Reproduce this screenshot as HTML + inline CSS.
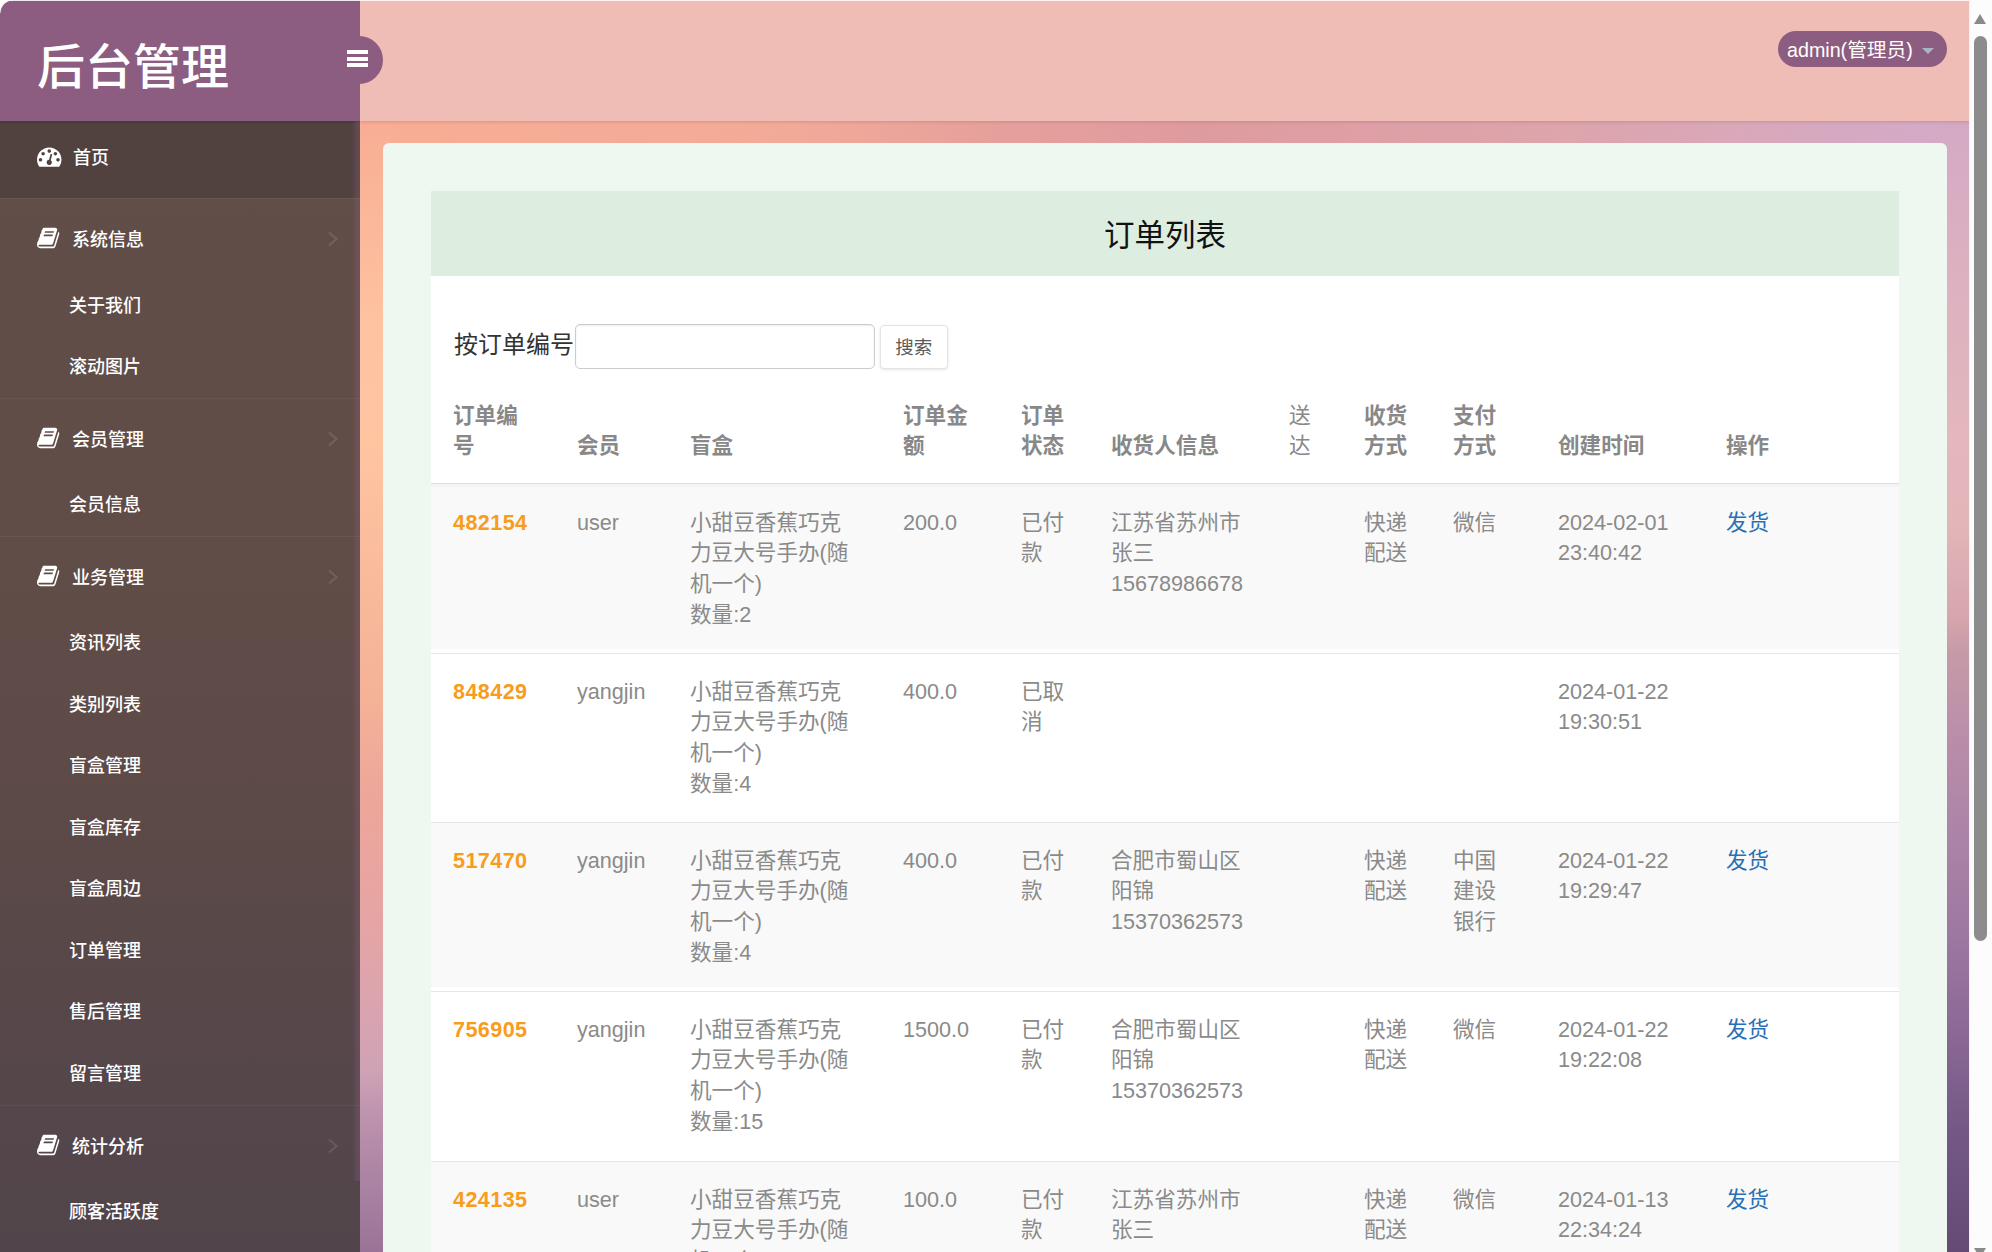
<!DOCTYPE html>
<html lang="zh-CN">
<head>
<meta charset="utf-8">
<title>后台管理</title>
<style>
*{box-sizing:border-box;margin:0;padding:0}
html,body{width:1992px;height:1252px;overflow:hidden}
body{position:relative;font-family:"Liberation Sans","Noto Sans CJK SC",sans-serif;background:#f2b09a;color:#333}
#bgtop{position:absolute;left:360px;top:121px;width:1609px;height:30px;background:linear-gradient(to right,#f8ad94 0%,#f3ab98 25%,#e6a09c 40%,#de9b9f 52%,#dda5ac 75%,#d6a9c1 92%,#d3aac8 100%)}
#bgleft{position:absolute;left:360px;top:121px;width:30px;height:1131px;background:linear-gradient(to bottom,#f8ad94 0%,#fec4a1 19%,#ffc5a1 28%,#f8b99b 42%,#f4b297 51%,#eda69a 60%,#e6a5a3 70%,#d9a4b0 79%,#cfa2b5 84%,#bd93ad 88%,#ad85a4 93%,#9b7399 100%)}
#bgright{position:absolute;left:1940px;top:121px;width:29px;height:1131px;background:linear-gradient(to bottom,#d4a9c4 0%,#dcb0c0 12%,#e3b7bc 28%,#e2b5b9 36%,#d6a5ad 44%,#c79aa8 47%,#b98da8 55%,#ab82a8 64%,#9d78a0 72%,#8a6896 81%,#755885 89%,#654a76 100%)}
#side{position:absolute;left:0;top:0;width:360px;height:1252px;background:linear-gradient(to bottom,#624e48 0%,#614d48 35%,#5e4b47 60%,#574749 80%,#51454b 100%);color:#fff}
#brand{position:absolute;left:0;top:0;width:360px;height:121px;background:#8c5d80}
#bshadow{position:absolute;left:0;top:121px;width:360px;height:3px;background:linear-gradient(to bottom,rgba(40,10,40,.25),rgba(40,10,40,0))}
#brand span{position:absolute;left:37px;top:33px;font-size:48px;line-height:70px;color:#fff;white-space:nowrap;font-weight:500}
#home{position:absolute;left:0;top:121px;width:360px;height:77px;background:#514240}
.sep{position:absolute;left:0;width:360px;height:1px;background:rgba(255,255,255,.05)}
.mi{position:absolute;left:72px;font-size:18px;line-height:26px;height:26px;white-space:nowrap;color:#fff;font-weight:500}
.si{position:absolute;left:69px;font-size:18px;line-height:26px;height:26px;white-space:nowrap;color:#fff;font-weight:500}
.ico{position:absolute;width:24px;height:24px;overflow:visible}
.chev{position:absolute;left:327.200px;width:12px;height:16px}
#sscroll{position:absolute;left:352px;top:121px;width:8px;height:1060px;background:linear-gradient(to right,rgba(140,93,128,0),rgba(140,93,128,.3) 70%)}
#top{position:absolute;left:360px;top:0;width:1609px;height:121px;background:#efbdb5;box-shadow:0 1px 3px rgba(120,60,40,.22)}
#toggle{position:absolute;left:334.5px;top:36px;width:48px;height:48px;border-radius:50%;background:#8c5d80}
#toggle i{position:absolute;left:12.700px;width:20.800px;height:3.800px;background:#fff}
#pill{position:absolute;left:1778px;top:31px;width:169px;height:36px;border-radius:18px;background:#8c5d80;color:#fff;font-size:19.700px;line-height:39px;padding-left:9px;white-space:nowrap}
#pill b{position:absolute;left:143.500px;top:17px;width:0;height:0;border-left:6.500px solid transparent;border-right:6.500px solid transparent;border-top:6px solid #a9b6c8}
#card{position:absolute;left:383px;top:143px;width:1564px;height:1140px;background:#eef7f0;border-radius:6px}
#chead{position:absolute;left:431px;top:191px;width:1468px;height:84.700px;background:#ddeee0;text-align:center;font-size:30.500px;line-height:88px;color:#111}
#cbody{position:absolute;left:431px;top:275.700px;width:1468px;height:1000px;background:#fff}
#lbl{position:absolute;left:454px;top:327px;font-size:24px;line-height:36px;color:#333;white-space:nowrap}
#inp{position:absolute;left:575px;top:324px;width:300px;height:45px;border:1px solid #ccc;border-radius:5px;background:#fff;box-shadow:inset 0 1px 2px rgba(0,0,0,.08)}
#btn{position:absolute;left:880px;top:325px;width:67.500px;height:44px;border:1px solid #e4e4e4;border-radius:4px;background:#fff;font-size:18.500px;line-height:44px;text-align:center;color:#5a5a5a;box-shadow:0 1px 3px rgba(0,0,0,.1)}
table{position:absolute;left:431px;top:376.500px;width:1468px;border-collapse:separate;border-spacing:0;table-layout:fixed;font-size:21.600px;line-height:30.750px;color:#8a8a8a}
th,td{padding:22.500px 22px;text-align:left;vertical-align:top;font-weight:normal;word-break:break-all}
th span,td span{position:relative;top:1.1px;display:block}
th{vertical-align:bottom;font-weight:bold;color:#888;border-bottom:1px solid #dedede}
th.n{font-weight:normal}
tbody td{border-top:1px solid #e6e6e6;padding-top:21.500px;padding-bottom:23.500px}
th span{top:1.700px}
tbody tr:nth-child(odd) td{background:#f9f9f9;border-bottom:4px solid #fff;padding-bottom:19.500px}
tbody tr:first-child td{border-top:3px solid #f5f5f5;padding-top:19.500px}
tbody tr:nth-child(4) td{padding-bottom:24.500px}
td.id{color:#f89c1c;font-weight:bold;letter-spacing:.4px}
td.op{color:#2a6fb5}
#sb{position:absolute;left:1969px;top:0;width:23px;height:1252px;background:#fcfcfc;border-left:1px solid #f3f3f3}
#sb .th{position:absolute;left:4px;top:36px;width:12.600px;height:905px;border-radius:7px;background:#8c8c8c}
#sb .up{position:absolute;left:3.800px;top:14px;width:0;height:0;border-left:6.600px solid transparent;border-right:6.600px solid transparent;border-bottom:10px solid #8a8a8a}
#edge{position:absolute;left:0;top:0;width:1992px;height:1.200px;background:rgba(255,255,255,.85)}
#corner{position:absolute;left:0;top:0;width:13px;height:13px;background:radial-gradient(circle at 100% 100%,rgba(255,255,255,0) 12px,#fff 13px)}
#sb .dn{position:absolute;left:3.800px;top:1248px;width:0;height:0;border-left:6.600px solid transparent;border-right:6.600px solid transparent;border-top:10px solid #8a8a8a}
</style>
</head>
<body>
<div id="bgtop"></div><div id="bgleft"></div><div id="bgright"></div>
<div id="top"></div>
<div id="side">
  <div id="brand"><span>后台管理</span></div>
  <div id="home"></div>
  <div id="bshadow"></div>
    <svg class="ico" style="left:36.8px;top:143.5px;width:24.5px;height:24.5px" viewBox="0 -1536 1792 1792"><path transform="scale(1,-1)" fill="#fff" d="M384 384q0 53 -37.500 90.500t-90.500 37.500t-90.500 -37.500t-37.500 -90.500t37.500 -90.500t90.500 -37.500t90.500 37.500t37.500 90.500zM576 832q0 53 -37.500 90.500t-90.500 37.500t-90.500 -37.500t-37.500 -90.500t37.500 -90.500t90.500 -37.500t90.500 37.500t37.500 90.500zM1004 351l101 382q6 26 -7.500 48.500t-38.500 29.500t-48 -6.500t-30 -39.500l-101 -382q-60 -5 -107 -43.500t-63 -98.500q-20 -77 20 -146t117 -89t146 20t89 117q16 60 -6 117t-72 91zM1664 384q0 53 -37.500 90.500t-90.500 37.500t-90.500 -37.500t-37.500 -90.500t37.500 -90.500t90.500 -37.500t90.500 37.500t37.500 90.500zM1024 1024q0 53 -37.500 90.500t-90.500 37.500t-90.500 -37.500t-37.500 -90.500t37.500 -90.500t90.500 -37.500t90.500 37.500t37.500 90.500zM1472 832q0 53 -37.500 90.500t-90.500 37.500t-90.500 -37.500t-37.500 -90.500t37.500 -90.500t90.500 -37.500t90.500 37.500t37.500 90.500zM1792 384q0 -261 -141 -483q-19 -29 -54 -29h-1402q-35 0 -54 29q-141 221 -141 483q0 182 71 348t191 286t286 191t348 71t348 -71t286 -191t191 -286t71 -348z"/></svg>
  <div class="mi" style="top:145.0px;left:73px">首页</div>
  <svg class="ico" style="left:36.5px;top:225.8px;width:24px;height:24px" viewBox="0 -1536 1792 1792"><path transform="scale(1,-1)" fill="#fff" d="M1639 1058q40 -57 18 -129l-275 -906q-19 -64 -76.500 -107.500t-122.500 -43.500h-923q-77 0 -148.500 53.500t-99.500 131.500q-24 67 -2 127q0 4 3 27t4 37q1 8 -3 21.500t-3 19.500q2 11 8 21t16.500 23.500t16.500 23.500q23 38 45 91.500t30 91.500q3 10 0.500 30t-0.500 28q3 11 17 28t17 23q21 36 42 92t25 90q1 9 -2.500 32t0.500 28q4 13 22 30.500t22 22.500q19 26 42.500 84.500t27.500 96.500q1 8 -3 25.500t-2 26.500q2 8 9 18t18 23t17 21q8 12 16.500 30.500t15 35t16 36t19.500 32t26.500 23.500t36 11.500t47.500 -5.500l-1 -3q38 9 51 9h761q74 0 114 -56t18 -130l-274 -906q-36 -119 -71.500 -153.500t-128.500 -34.500h-869q-27 0 -38 -15q-11 -16 -1 -43q24 -70 144 -70h923q29 0 56 15.500t35 41.500l300 987q7 22 5 57q38 -15 59 -43zM575 1056q-4 -13 2 -22.500t20 -9.500h608q13 0 25.500 9.500t16.500 22.500l21 64q4 13 -2 22.500t-20 9.500h-608q-13 0 -25.500 -9.500t-16.500 -22.500zM492 800q-4 -13 2 -22.500t20 -9.500h608q13 0 25.500 9.500t16.500 22.500l21 64q4 13 -2 22.500t-20 9.500h-608q-13 0 -25.500 -9.500t-16.500 -22.500z"/></svg>
  <div class="mi" style="top:226.5px">系统信息</div>
  <svg class="chev" style="top:230.8px" viewBox="0 0 12 16"><path d="M2 1.500l7.500 6.500-7.500 6.500" fill="none" stroke="rgba(255,255,255,.11)" stroke-width="2.200"/></svg>
  <svg class="ico" style="left:36.5px;top:425.8px;width:24px;height:24px" viewBox="0 -1536 1792 1792"><path transform="scale(1,-1)" fill="#fff" d="M1639 1058q40 -57 18 -129l-275 -906q-19 -64 -76.500 -107.500t-122.500 -43.500h-923q-77 0 -148.500 53.500t-99.500 131.500q-24 67 -2 127q0 4 3 27t4 37q1 8 -3 21.500t-3 19.500q2 11 8 21t16.500 23.500t16.500 23.500q23 38 45 91.500t30 91.500q3 10 0.500 30t-0.500 28q3 11 17 28t17 23q21 36 42 92t25 90q1 9 -2.500 32t0.500 28q4 13 22 30.500t22 22.500q19 26 42.500 84.500t27.500 96.500q1 8 -3 25.500t-2 26.500q2 8 9 18t18 23t17 21q8 12 16.500 30.500t15 35t16 36t19.500 32t26.500 23.500t36 11.500t47.500 -5.500l-1 -3q38 9 51 9h761q74 0 114 -56t18 -130l-274 -906q-36 -119 -71.500 -153.500t-128.500 -34.500h-869q-27 0 -38 -15q-11 -16 -1 -43q24 -70 144 -70h923q29 0 56 15.500t35 41.500l300 987q7 22 5 57q38 -15 59 -43zM575 1056q-4 -13 2 -22.500t20 -9.500h608q13 0 25.500 9.500t16.500 22.500l21 64q4 13 -2 22.500t-20 9.500h-608q-13 0 -25.500 -9.500t-16.500 -22.500zM492 800q-4 -13 2 -22.500t20 -9.500h608q13 0 25.500 9.500t16.500 22.500l21 64q4 13 -2 22.500t-20 9.500h-608q-13 0 -25.500 -9.500t-16.500 -22.500z"/></svg>
  <div class="mi" style="top:426.5px">会员管理</div>
  <svg class="chev" style="top:430.8px" viewBox="0 0 12 16"><path d="M2 1.500l7.500 6.500-7.500 6.500" fill="none" stroke="rgba(255,255,255,.11)" stroke-width="2.200"/></svg>
  <svg class="ico" style="left:36.5px;top:563.8px;width:24px;height:24px" viewBox="0 -1536 1792 1792"><path transform="scale(1,-1)" fill="#fff" d="M1639 1058q40 -57 18 -129l-275 -906q-19 -64 -76.500 -107.500t-122.500 -43.500h-923q-77 0 -148.500 53.500t-99.500 131.500q-24 67 -2 127q0 4 3 27t4 37q1 8 -3 21.500t-3 19.500q2 11 8 21t16.500 23.500t16.500 23.500q23 38 45 91.500t30 91.500q3 10 0.500 30t-0.500 28q3 11 17 28t17 23q21 36 42 92t25 90q1 9 -2.500 32t0.500 28q4 13 22 30.500t22 22.500q19 26 42.500 84.500t27.500 96.500q1 8 -3 25.500t-2 26.500q2 8 9 18t18 23t17 21q8 12 16.500 30.500t15 35t16 36t19.500 32t26.500 23.500t36 11.500t47.500 -5.500l-1 -3q38 9 51 9h761q74 0 114 -56t18 -130l-274 -906q-36 -119 -71.500 -153.500t-128.500 -34.500h-869q-27 0 -38 -15q-11 -16 -1 -43q24 -70 144 -70h923q29 0 56 15.500t35 41.500l300 987q7 22 5 57q38 -15 59 -43zM575 1056q-4 -13 2 -22.500t20 -9.500h608q13 0 25.500 9.500t16.500 22.500l21 64q4 13 -2 22.500t-20 9.500h-608q-13 0 -25.500 -9.500t-16.500 -22.500zM492 800q-4 -13 2 -22.500t20 -9.500h608q13 0 25.500 9.500t16.500 22.500l21 64q4 13 -2 22.500t-20 9.500h-608q-13 0 -25.500 -9.500t-16.500 -22.500z"/></svg>
  <div class="mi" style="top:564.5px">业务管理</div>
  <svg class="chev" style="top:568.8px" viewBox="0 0 12 16"><path d="M2 1.500l7.500 6.500-7.500 6.500" fill="none" stroke="rgba(255,255,255,.11)" stroke-width="2.200"/></svg>
  <svg class="ico" style="left:36.5px;top:1132.8px;width:24px;height:24px" viewBox="0 -1536 1792 1792"><path transform="scale(1,-1)" fill="#fff" d="M1639 1058q40 -57 18 -129l-275 -906q-19 -64 -76.500 -107.500t-122.500 -43.500h-923q-77 0 -148.500 53.500t-99.500 131.500q-24 67 -2 127q0 4 3 27t4 37q1 8 -3 21.500t-3 19.500q2 11 8 21t16.500 23.500t16.500 23.500q23 38 45 91.500t30 91.500q3 10 0.500 30t-0.500 28q3 11 17 28t17 23q21 36 42 92t25 90q1 9 -2.500 32t0.500 28q4 13 22 30.500t22 22.500q19 26 42.500 84.500t27.500 96.500q1 8 -3 25.500t-2 26.500q2 8 9 18t18 23t17 21q8 12 16.500 30.500t15 35t16 36t19.500 32t26.500 23.500t36 11.500t47.500 -5.500l-1 -3q38 9 51 9h761q74 0 114 -56t18 -130l-274 -906q-36 -119 -71.500 -153.500t-128.500 -34.500h-869q-27 0 -38 -15q-11 -16 -1 -43q24 -70 144 -70h923q29 0 56 15.500t35 41.500l300 987q7 22 5 57q38 -15 59 -43zM575 1056q-4 -13 2 -22.500t20 -9.500h608q13 0 25.500 9.500t16.500 22.500l21 64q4 13 -2 22.500t-20 9.500h-608q-13 0 -25.500 -9.500t-16.500 -22.500zM492 800q-4 -13 2 -22.500t20 -9.500h608q13 0 25.500 9.500t16.500 22.500l21 64q4 13 -2 22.500t-20 9.500h-608q-13 0 -25.500 -9.500t-16.500 -22.500z"/></svg>
  <div class="mi" style="top:1133.5px">统计分析</div>
  <svg class="chev" style="top:1137.8px" viewBox="0 0 12 16"><path d="M2 1.500l7.500 6.500-7.500 6.500" fill="none" stroke="rgba(255,255,255,.11)" stroke-width="2.200"/></svg>
  <div class="si" style="top:293px">关于我们</div>
  <div class="si" style="top:354px">滚动图片</div>
  <div class="si" style="top:492px">会员信息</div>
  <div class="si" style="top:630px">资讯列表</div>
  <div class="si" style="top:692px">类别列表</div>
  <div class="si" style="top:753px">盲盒管理</div>
  <div class="si" style="top:815px">盲盒库存</div>
  <div class="si" style="top:876px">盲盒周边</div>
  <div class="si" style="top:938px">订单管理</div>
  <div class="si" style="top:999px">售后管理</div>
  <div class="si" style="top:1061px">留言管理</div>
  <div class="si" style="top:1199px">顾客活跃度</div>
  <div class="sep" style="top:198px"></div>
  <div class="sep" style="top:398px"></div>
  <div class="sep" style="top:536px"></div>
  <div class="sep" style="top:1105px"></div>
  <div id="sscroll"></div>
</div>
<div id="toggle"><i style="top:14.100px"></i><i style="top:20.900px"></i><i style="top:27.400px"></i></div>
<div id="pill">admin(管理员)<b></b></div>
<div id="card"></div>
<div id="chead">订单列表</div>
<div id="cbody"></div>
<div id="lbl">按订单编号</div>
<div id="inp"></div>
<div id="btn">搜索</div>
<table><colgroup><col style="width:124px"><col style="width:113px"><col style="width:213px"><col style="width:118px"><col style="width:90px"><col style="width:178px"><col style="width:75px"><col style="width:89px"><col style="width:105px"><col style="width:168px"><col style="width:195px"></colgroup>
<thead><tr><th><span>订单编号</span></th><th><span>会员</span></th><th><span>盲盒</span></th><th><span>订单金额</span></th><th><span>订单状态</span></th><th><span>收货人信息</span></th><th class="n"><span>送达</span></th><th><span>收货方式</span></th><th><span>支付方式</span></th><th><span>创建时间</span></th><th><span>操作</span></th></tr></thead>
<tbody>
<tr><td class="id"><span>482154</span></td><td><span>user</span></td><td><span>小甜豆香蕉巧克力豆大号手办(随机一个)<br>数量:2</span></td><td><span>200.0</span></td><td><span>已付款</span></td><td><span>江苏省苏州市<br>张三<br>15678986678</span></td><td><span></span></td><td><span>快递配送</span></td><td><span>微信</span></td><td><span>2024-02-01 23:40:42</span></td><td class="op"><span>发货</span></td></tr>
<tr><td class="id"><span>848429</span></td><td><span>yangjin</span></td><td><span>小甜豆香蕉巧克力豆大号手办(随机一个)<br>数量:4</span></td><td><span>400.0</span></td><td><span>已取消</span></td><td><span></span></td><td><span></span></td><td><span></span></td><td><span></span></td><td><span>2024-01-22 19:30:51</span></td><td class="op"><span></span></td></tr>
<tr><td class="id"><span>517470</span></td><td><span>yangjin</span></td><td><span>小甜豆香蕉巧克力豆大号手办(随机一个)<br>数量:4</span></td><td><span>400.0</span></td><td><span>已付款</span></td><td><span>合肥市蜀山区<br>阳锦<br>15370362573</span></td><td><span></span></td><td><span>快递配送</span></td><td><span>中国建设银行</span></td><td><span>2024-01-22 19:29:47</span></td><td class="op"><span>发货</span></td></tr>
<tr><td class="id"><span>756905</span></td><td><span>yangjin</span></td><td><span>小甜豆香蕉巧克力豆大号手办(随机一个)<br>数量:15</span></td><td><span>1500.0</span></td><td><span>已付款</span></td><td><span>合肥市蜀山区<br>阳锦<br>15370362573</span></td><td><span></span></td><td><span>快递配送</span></td><td><span>微信</span></td><td><span>2024-01-22 19:22:08</span></td><td class="op"><span>发货</span></td></tr>
<tr><td class="id"><span>424135</span></td><td><span>user</span></td><td><span>小甜豆香蕉巧克力豆大号手办(随机一个)<br>数量:1</span></td><td><span>100.0</span></td><td><span>已付款</span></td><td><span>江苏省苏州市<br>张三<br>15678986678</span></td><td><span></span></td><td><span>快递配送</span></td><td><span>微信</span></td><td><span>2024-01-13 22:34:24</span></td><td class="op"><span>发货</span></td></tr>
</tbody></table>
<div id="edge"></div><div id="corner"></div>
<div id="sb"><div class="up"></div><div class="th"></div><div class="dn"></div></div>
</body>
</html>
